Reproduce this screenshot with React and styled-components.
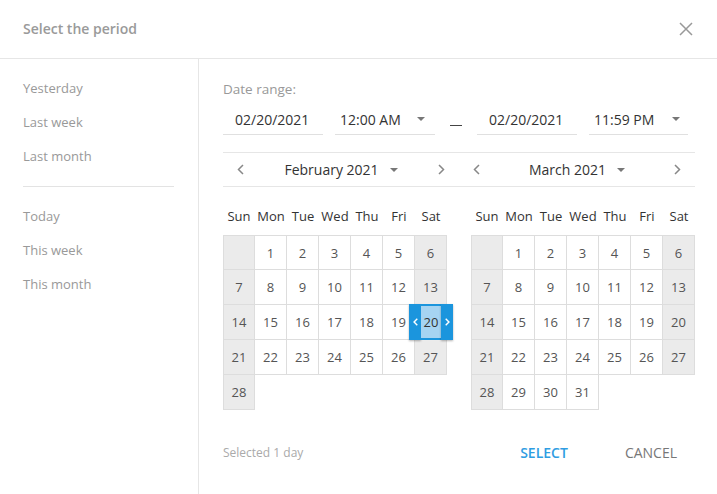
import React from 'react';
import styled, { createGlobalStyle } from 'styled-components';

const GlobalStyle = createGlobalStyle`
  body {
    margin: 0;
    font-family: 'Open Sans', 'Liberation Sans', sans-serif;
    background: #fff;
  }
  * { box-sizing: border-box; }
`;

const Dialog = styled.div`
  width: 717px;
  height: 494px;
  display: flex;
  flex-direction: column;
  background: #fff;
`;

const Header = styled.div`
  height: 59px;
  flex-shrink: 0;
  border-bottom: 1px solid #e6e6e6;
  display: flex;
  align-items: center;
  justify-content: space-between;
  padding: 0 23px 1px 23px;
`;

const Title = styled.div`
  font-size: 14px;
  font-weight: 600;
  color: #9a9a9a;
`;

const Close = styled.button`
  border: none;
  background: none;
  padding: 0;
  width: 16px;
  height: 16px;
  display: flex;
  cursor: pointer;
`;

const Body = styled.div`
  flex: 1;
  display: flex;
`;

const Sidebar = styled.div`
  width: 199px;
  flex-shrink: 0;
  border-right: 1px solid #e6e6e6;
  padding: 12px 24px 0 23px;
`;

const Preset = styled.div`
  height: 34px;
  line-height: 34px;
  font-size: 13px;
  color: #999;
  cursor: pointer;
`;

const Divider = styled.div`
  height: 1px;
  background: #e3e3e3;
  margin: 13px 0 12px;
`;

const Main = styled.div`
  flex: 1;
  display: flex;
  flex-direction: column;
  padding: 20px 22px 0 24px;
`;

const Label = styled.div`
  font-size: 13.5px;
  line-height: 20px;
  color: #999;
`;

const InputsRow = styled.div`
  display: flex;
  margin-top: 5px;
`;

const Field = styled.div`
  width: ${p => p.$w}px;
  margin-right: ${p => p.$mr || 0}px;
  height: 31px;
  border-bottom: 1px solid #e0e0e0;
  display: flex;
  align-items: center;
  justify-content: space-between;
  padding: 0 8px 0 ${p => p.$pl}px;
  font-size: 14px;
  color: #333;
`;

const Caret = styled.span`
  width: 0;
  height: 0;
  border-left: 4.5px solid transparent;
  border-right: 4.5px solid transparent;
  border-top: 4.5px solid #777;
  margin-right: ${p => p.$mr || 0}px;
`;

const DashBox = styled.div`
  width: 42px;
  display: flex;
  justify-content: center;
  align-items: flex-end;
  padding-bottom: 9px;
`;

const Dash = styled.span`
  width: 12px;
  height: 1px;
  background: #444;
`;

const NavRow = styled.div`
  display: flex;
  margin-top: 17px;
  border-top: 1px solid #e6e6e6;
  border-bottom: 1px solid #e6e6e6;
  height: 35px;
`;

const NavHalf = styled.div`
  flex: 1;
  display: flex;
  align-items: center;
  justify-content: space-between;
`;

const Arrow = styled.button`
  width: 34px;
  height: 33px;
  border: none;
  background: none;
  padding: 0;
  display: flex;
  align-items: center;
  justify-content: center;
  cursor: pointer;
`;

const MonthPick = styled.div`
  display: flex;
  align-items: center;
  gap: 11px;
  font-size: 14px;
  color: #333;
`;

const Calendars = styled.div`
  display: flex;
  gap: 24px;
  margin-top: 19px;
`;

const Weekdays = styled.div`
  display: grid;
  grid-template-columns: repeat(7, 32px);
  height: 20px;
  margin-bottom: 9px;
`;

const Weekday = styled.div`
  text-align: center;
  font-size: 13px;
  line-height: 20px;
  color: #333;
`;

const Grid = styled.div`
  display: grid;
  grid-template-columns: repeat(7, 32px);
  grid-auto-rows: 35px;
`;

const Cell = styled.div`
  position: relative;
  display: flex;
  align-items: center;
  justify-content: center;
  font-size: 13px;
  color: #555;
  background: ${p => (p.$blank ? 'transparent' : p.$weekend ? '#ebebeb' : '#fff')};
  border-right: ${p => (p.$blank ? 'none' : '1px solid #ddd')};
  border-bottom: ${p => (p.$blank ? 'none' : '1px solid #ddd')};
  border-top: ${p => (p.$top && !p.$blank ? '1px solid #ddd' : 'none')};
  border-left: ${p => (p.$left && !p.$blank ? '1px solid #ddd' : 'none')};
`;

const Selection = styled.div`
  position: absolute;
  top: -1px;
  bottom: -1px;
  left: -6px;
  right: -7px;
  display: flex;
  z-index: 2;
`;

const Handle = styled.div`
  width: 12px;
  background: #1b95dd;
  display: flex;
  align-items: center;
  justify-content: center;
  box-shadow: 0 1px 2px rgba(0, 0, 0, 0.3);
`;

const SelMid = styled.div`
  flex: 1;
  background: #a6d4f2;
  border-top: 2px solid #1b95dd;
  border-bottom: 2px solid #1b95dd;
  display: flex;
  align-items: center;
  justify-content: center;
  color: #333;
  font-size: 13px;
`;

const Footer = styled.div`
  margin-top: auto;
  height: 36px;
  margin-bottom: 24px;
  display: flex;
  align-items: center;
`;

const Status = styled.div`
  flex: 1;
  font-size: 12px;
  color: #aaa;
`;

const Buttons = styled.div`
  display: flex;
  gap: 21px;
`;

const TextButton = styled.button`
  border: none;
  background: none;
  padding: 0 18px;
  height: 36px;
  font-family: inherit;
  font-size: 14px;
  font-weight: ${p => (p.$primary ? 600 : 400)};
  color: ${p => (p.$primary ? '#2f9de2' : '#777')};
  cursor: pointer;
`;

const Chevron = ({ dir, color = '#888', w = 7, h = 11, sw = 1.5 }) => (
  <svg width={w} height={h} viewBox="0 0 7 11">
    <polyline
      points={dir === 'left' ? '6,1 1.5,5.5 6,10' : '1,1 5.5,5.5 1,10'}
      fill="none"
      stroke={color}
      strokeWidth={sw}
    />
  </svg>
);

const WEEK = ['Sun', 'Mon', 'Tue', 'Wed', 'Thu', 'Fri', 'Sat'];

function Month({ offset, days, selected }) {
  const cells = [];
  for (let i = 0; i < 35; i++) {
    const day = i - offset + 1;
    const col = i % 7;
    const row = Math.floor(i / 7);
    const blank = day > days;
    const label = day >= 1 && !blank ? day : '';
    cells.push(
      <Cell
        key={i}
        $blank={blank}
        $weekend={col === 0 || col === 6}
        $top={row === 0}
        $left={col === 0}
      >
        {day === selected ? (
          <Selection>
            <Handle><Chevron dir="left" color="#fff" w={5} h={8} sw={2} /></Handle>
            <SelMid>{day}</SelMid>
            <Handle><Chevron dir="right" color="#fff" w={5} h={8} sw={2} /></Handle>
          </Selection>
        ) : (
          label
        )}
      </Cell>
    );
  }
  return (
    <div>
      <Weekdays>
        {WEEK.map(d => <Weekday key={d}>{d}</Weekday>)}
      </Weekdays>
      <Grid>{cells}</Grid>
    </div>
  );
}

export default function App() {
  return (
    <Dialog>
      <GlobalStyle />
      <Header>
        <Title>Select the period</Title>
        <Close aria-label="close">
          <svg width="16" height="16" viewBox="0 0 16 16">
            <path d="M2 2 L14 14 M14 2 L2 14" stroke="#999" strokeWidth="1.5" />
          </svg>
        </Close>
      </Header>
      <Body>
        <Sidebar>
          <Preset>Yesterday</Preset>
          <Preset>Last week</Preset>
          <Preset>Last month</Preset>
          <Divider />
          <Preset>Today</Preset>
          <Preset>This week</Preset>
          <Preset>This month</Preset>
        </Sidebar>
        <Main>
          <Label>Date range:</Label>
          <InputsRow>
            <Field $w={100} $mr={12} $pl={12}>02/20/2021</Field>
            <Field $w={100} $pl={5}>12:00 AM<Caret $mr={2} /></Field>
            <DashBox><Dash /></DashBox>
            <Field $w={100} $mr={12} $pl={12}>02/20/2021</Field>
            <Field $w={99} $pl={5}>11:59 PM<Caret $mr={0} /></Field>
          </InputsRow>
          <NavRow>
            <NavHalf>
              <Arrow><Chevron dir="left" /></Arrow>
              <MonthPick>February 2021<Caret /></MonthPick>
              <Arrow><Chevron dir="right" /></Arrow>
            </NavHalf>
            <NavHalf>
              <Arrow><Chevron dir="left" /></Arrow>
              <MonthPick>March 2021<Caret /></MonthPick>
              <Arrow><Chevron dir="right" /></Arrow>
            </NavHalf>
          </NavRow>
          <Calendars>
            <Month offset={1} days={28} selected={20} />
            <Month offset={1} days={31} />
          </Calendars>
          <Footer>
            <Status>Selected 1 day</Status>
            <Buttons>
              <TextButton $primary>SELECT</TextButton>
              <TextButton>CANCEL</TextButton>
            </Buttons>
          </Footer>
        </Main>
      </Body>
    </Dialog>
  );
}
